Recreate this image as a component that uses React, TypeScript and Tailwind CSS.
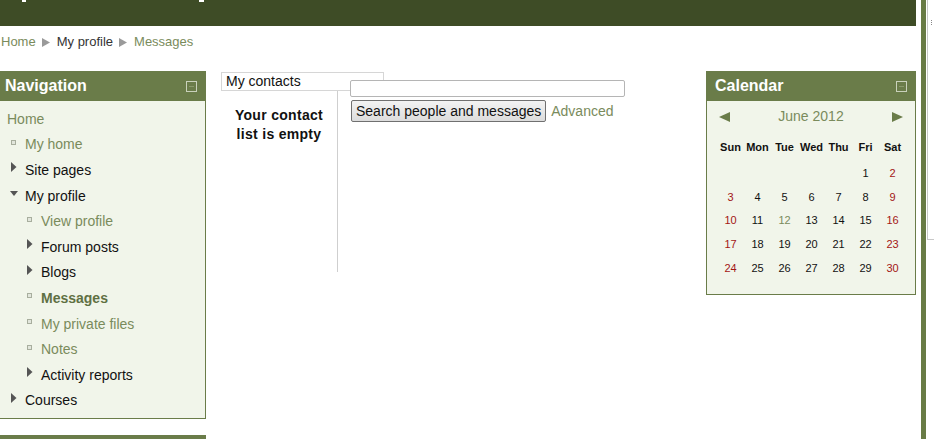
import React from "react";

const LINK = "#7a8b5c";

function Bullet() {
  return <span className="inline-block w-[5px] h-[5px] border border-[#a8ae9e] bg-[#e2e6dc] mb-[4px] ml-[1px]" />;
}
function TriRight() {
  return (
    <svg width="6" height="10" viewBox="0 0 6 10" className="mb-[5px] ml-[1px]">
      <path d="M0 0 L5.5 5 L0 10 Z" fill="#555" />
    </svg>
  );
}
function TriDown() {
  return (
    <svg width="9" height="6" viewBox="0 0 9 6" className="mb-[4px]">
      <path d="M0 0 L8 0 L4 5 Z" fill="#555" />
    </svg>
  );
}

type Item = { t: string; lvl: 0 | 1 | 2; icon: "none" | "b" | "r" | "d"; c: string; bold?: boolean };

const items: Item[] = [
  { t: "Home", lvl: 0, icon: "none", c: LINK },
  { t: "My home", lvl: 1, icon: "b", c: LINK },
  { t: "Site pages", lvl: 1, icon: "r", c: "#111" },
  { t: "My profile", lvl: 1, icon: "d", c: "#111" },
  { t: "View profile", lvl: 2, icon: "b", c: LINK },
  { t: "Forum posts", lvl: 2, icon: "r", c: "#111" },
  { t: "Blogs", lvl: 2, icon: "r", c: "#111" },
  { t: "Messages", lvl: 2, icon: "b", c: "#5f7043", bold: true },
  { t: "My private files", lvl: 2, icon: "b", c: LINK },
  { t: "Notes", lvl: 2, icon: "b", c: LINK },
  { t: "Activity reports", lvl: 2, icon: "r", c: "#111" },
  { t: "Courses", lvl: 1, icon: "r", c: "#111" },
];

function CollapseIcon() {
  return (
    <span className="w-[11px] h-[11px] border border-[#c9d1bb] flex items-center justify-center">
      <span className="w-[5px] h-px bg-[#8a9a6c]" />
    </span>
  );
}

function NavItem({ it }: { it: Item }) {
  const pl = it.lvl === 0 ? "pl-[7px]" : it.lvl === 1 ? "pl-[10px]" : "pl-[26px]";
  return (
    <div className={`h-[25.6px] flex items-center ${pl}`}>
      {it.lvl > 0 && (
        <span className="w-[15px] flex items-center">
          {it.icon === "b" && <Bullet />}
          {it.icon === "r" && <TriRight />}
          {it.icon === "d" && <TriDown />}
        </span>
      )}
      <span className={`text-[14px] leading-none ${it.bold ? "font-bold" : ""}`} style={{ color: it.c }}>
        {it.t}
      </span>
    </div>
  );
}

const RED = "#a31515";
const days = ["Sun", "Mon", "Tue", "Wed", "Thu", "Fri", "Sat"];
const weeks: (number | null)[][] = [
  [null, null, null, null, null, 1, 2],
  [3, 4, 5, 6, 7, 8, 9],
  [10, 11, 12, 13, 14, 15, 16],
  [17, 18, 19, 20, 21, 22, 23],
  [24, 25, 26, 27, 28, 29, 30],
];
const rowH = ["h-[25px]", "h-[23px]", "h-[23px]", "h-[24px]", "h-[24px]"];

function Crumb() {
  return (
    <svg width="9" height="9" viewBox="0 0 9 9" className="mx-[6px]">
      <path d="M0 0 L8 4.5 L0 9 Z" fill="#9a9a9a" />
    </svg>
  );
}

export default function App() {
  return (
    <div className="w-[934px] h-[439px] overflow-hidden bg-white flex items-start" style={{ fontFamily: '"Liberation Sans", Arial, sans-serif' }}>
      <div className="w-[916px] shrink-0 flex flex-col">
        <div className="h-[26px] shrink-0 bg-[#3e4c26] flex items-start">
          <span className="ml-[22px] w-[4px] h-[2px] bg-white" />
          <span className="ml-[173px] w-[5px] h-[2px] bg-white" />
        </div>
        <div className="pt-[8px] h-[45px] shrink-0 pl-[1px] flex items-start text-[13px] leading-[16px]">
          <span className="flex items-center">
            <span style={{ color: LINK }}>Home</span>
            <Crumb />
            <span className="text-[#333]">My profile</span>
            <Crumb />
            <span style={{ color: LINK }}>Messages</span>
          </span>
        </div>
        <div className="flex items-start shrink-0">
          {/* Navigation block */}
          <div className="w-[206px] shrink-0 flex flex-col">
            <div className="h-[30px] shrink-0 bg-[#6a7c49] flex items-center justify-between pl-[5px] pr-[9px]">
              <span className="text-white font-bold text-[16px]">Navigation</span>
              <CollapseIcon />
            </div>
            <div className="shrink-0 bg-[#f1f5ea] border-r border-b border-[#6a7c49] pt-[5px] pb-[5px]">
              {items.map((it) => (
                <NavItem key={it.t} it={it} />
              ))}
            </div>
            <div className="shrink-0 mt-[16px] h-[30px] bg-[#6a7c49]" />
          </div>

          {/* Middle messages */}
          <div className="ml-[15px] w-[485px] pt-[1px] flex items-start">
            <div className="w-[117px] h-[200px] border-r border-[#cfcfcf]">
              <div className="w-[163px] h-[19px] border border-[#d6d6d6] text-[14px] leading-[17px] pl-[4px] text-[#111] bg-white">
                My contacts
              </div>
              <div className="mt-[15px] text-center font-bold text-[14px] leading-[19px] text-[#111] tracking-[0.3px]">
                Your contact
                <br />
                list is empty
              </div>
            </div>
            <div className="relative pl-[12px] pt-[8px] flex flex-col">
              <div className="w-[275px] h-[17px] border border-[#b5b5b5] rounded-[2px] bg-white" />
              <div className="mt-[3px] flex items-center">
                <div className="ml-[1px] h-[22px] px-[4px] border border-[#707070] rounded-[2px] bg-gradient-to-b from-[#f3f3f3] to-[#dcdcdc] text-[14px] leading-[20px] text-[#111] whitespace-nowrap">
                  Search people and messages
                </div>
                <span className="ml-[5px] text-[14px]" style={{ color: LINK }}>
                  Advanced
                </span>
              </div>
            </div>
          </div>

          {/* Calendar */}
          <div className="w-[210px] shrink-0 flex flex-col">
            <div className="h-[30px] shrink-0 bg-[#6a7c49] flex items-center justify-between pl-[9px] pr-[9px]">
              <span className="text-white font-bold text-[16px]">Calendar</span>
              <CollapseIcon />
            </div>
            <div className="bg-[#f1f5ea] border-l border-r border-b border-[#6a7c49] h-[194px] px-[10px]">
              <div className="h-[30px] flex items-center justify-between px-[2px] pt-[1px]">
                <svg width="11" height="10" viewBox="0 0 11 10">
                  <path d="M11 0 L0 5 L11 10 Z" fill="#6a7c49" />
                </svg>
                <span className="text-[14px]" style={{ color: LINK }}>June 2012</span>
                <svg width="11" height="10" viewBox="0 0 11 10">
                  <path d="M0 0 L11 5 L0 10 Z" fill="#6a7c49" />
                </svg>
              </div>
              <div className="grid grid-cols-7 w-[189px] h-[30px] items-center pt-[3px]">
                {days.map((d) => (
                  <span key={d} className="text-center font-bold text-[11px] text-[#111]">
                    {d}
                  </span>
                ))}
              </div>
              <div className="w-[189px]">
                {weeks.map((w, i) => (
                  <div key={i} className={`grid grid-cols-7 items-center ${rowH[i]}`}>
                    {w.map((d, j) => (
                      <span
                        key={j}
                        className="text-center text-[11px]"
                        style={{ color: d === 12 ? "#7a8b5c" : j === 0 || j === 6 ? RED : "#111" }}
                      >
                        {d ?? ""}
                      </span>
                    ))}
                  </div>
                ))}
              </div>
            </div>
          </div>
        </div>
      </div>
      <div className="w-[5px] h-[439px] shrink-0" />
      <div className="w-[5px] h-[439px] shrink-0 bg-[#687b45]" />
      <div className="flex-1 flex flex-col">
        <div className="h-[240px] ml-[1px] border-l border-b border-[#c8c8c8] bg-white flex flex-col items-center pt-[20px] gap-[1px]">
          <span className="w-[1px] h-[1px] bg-[#888]" />
          <span className="w-[1px] h-[1px] bg-[#888]" />
          <span className="w-[1px] h-[1px] bg-[#888]" />
        </div>
      </div>
    </div>
  );
}
